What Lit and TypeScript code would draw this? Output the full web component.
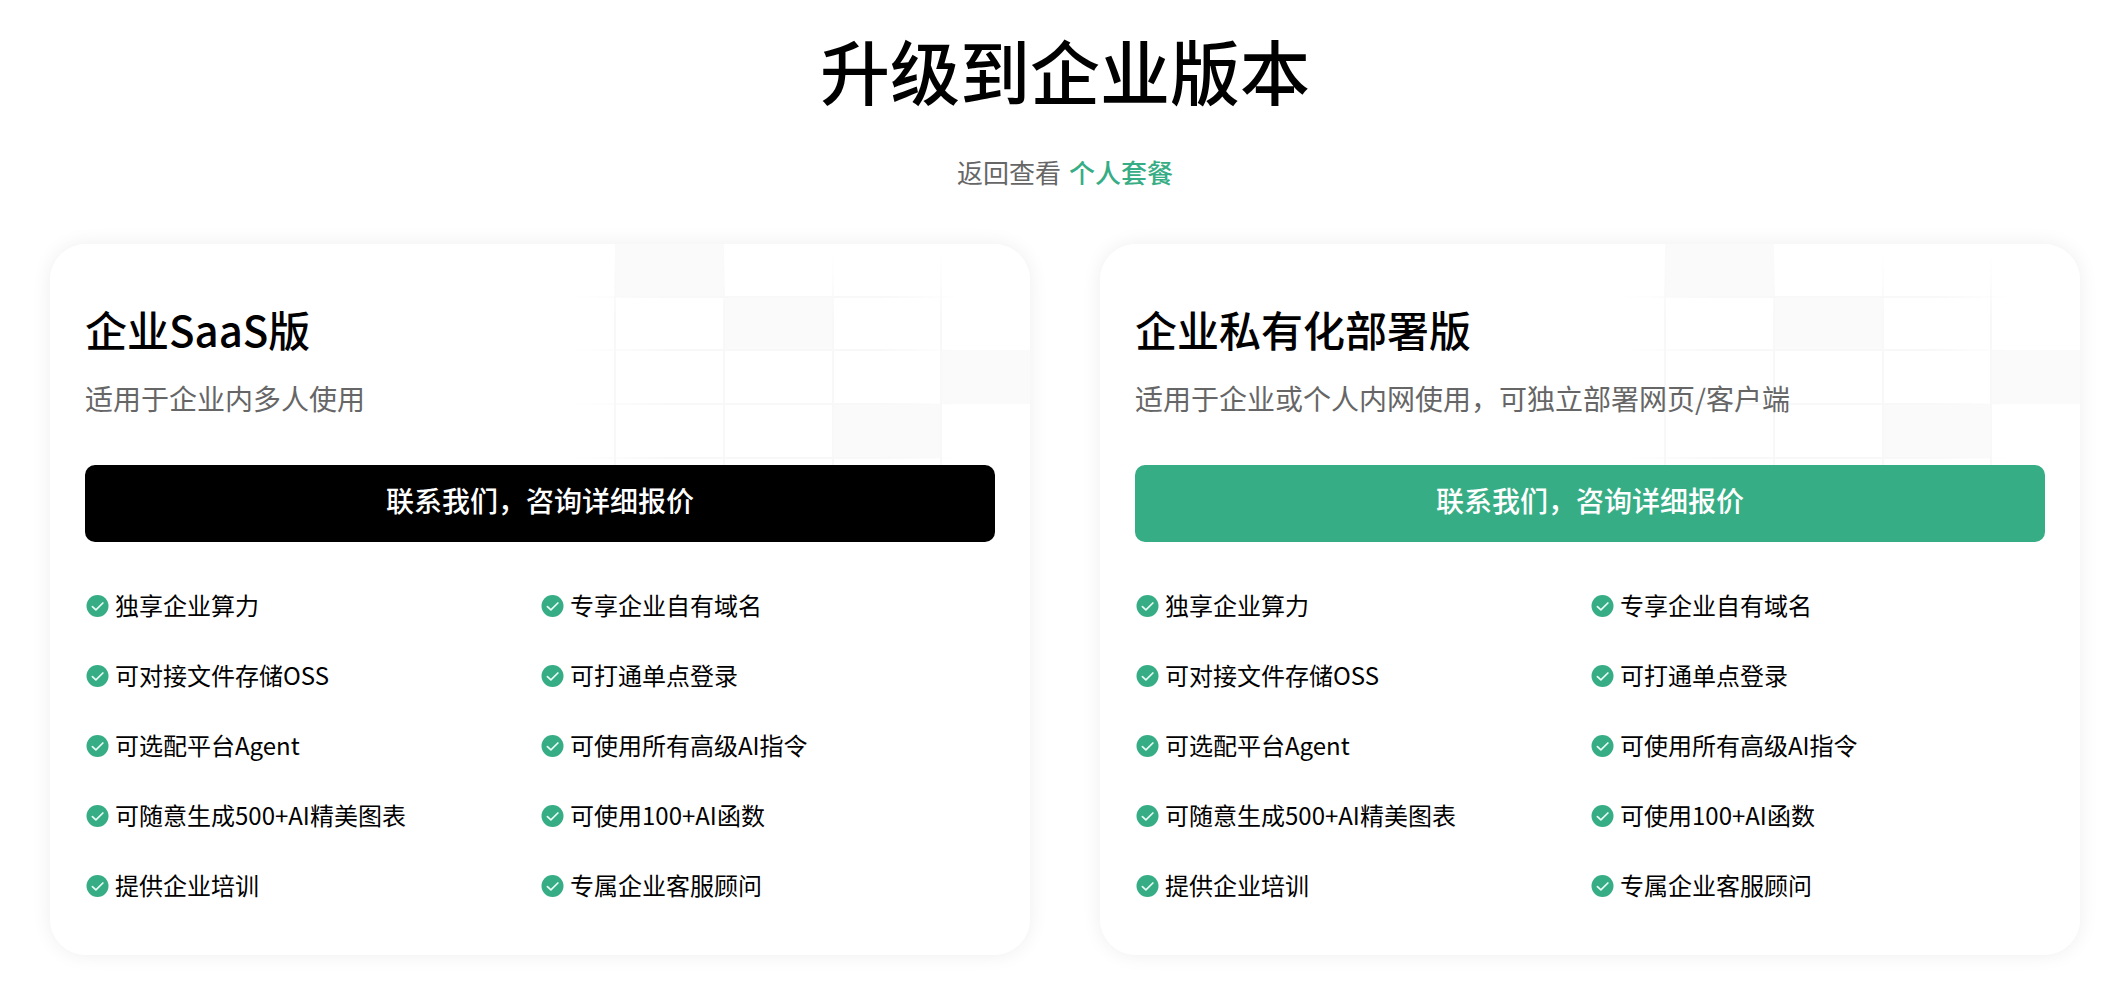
import { LitElement, html, css, svg } from "lit";
import { customElement, property } from "lit/decorators.js";

interface Plan {
  name: string;
  description: string;
  tone: "dark" | "green";
}

const FEATURES = [
  "独享企业算力",
  "专享企业自有域名",
  "可对接文件存储OSS",
  "可打通单点登录",
  "可选配平台Agent",
  "可使用所有高级AI指令",
  "可随意生成500+AI精美图表",
  "可使用100+AI函数",
  "提供企业培训",
  "专属企业客服顾问",
];

const PLANS: Plan[] = [
  { name: "企业SaaS版", description: "适用于企业内多人使用", tone: "dark" },
  {
    name: "企业私有化部署版",
    description: "适用于企业或个人内网使用，可独立部署网页/客户端",
    tone: "green",
  },
];

/* Faint checkered pattern: [x, y, width, height] of the filled cells. */
const CELLS = [
  [65, 0, 109, 53],
  [174, 53, 108, 54],
  [390, 106, 90, 54],
  [282, 160, 108, 54],
];

@customElement("plan-card")
export class PlanCard extends LitElement {
  @property({ attribute: false }) plan!: Plan;

  static styles = css`
    :host {
      display: block;
      min-width: 0;
    }
    .card {
      position: relative;
      overflow: hidden;
      box-sizing: border-box;
      height: 100%;
      padding: 53px 35px 34px;
      border-radius: 36px;
      background: #fff;
    }
    .frame {
      height: 100%;
      border-radius: 36px;
      box-shadow: 0 0 20px rgba(0, 0, 0, 0.07);
    }
    .pattern {
      position: absolute;
      top: 0;
      right: 0;
      width: 480px;
      height: 221px;
    }
    .content {
      position: relative;
    }
    .name {
      margin: 0;
      font-size: 42px;
      line-height: 64px;
      font-weight: 500;
    }
    .description {
      margin: 17px 0 0;
      font-size: 28px;
      line-height: 40px;
      color: #666;
    }
    .contact {
      display: block;
      width: 100%;
      height: 77px;
      margin: 47px 0 0;
      padding: 0 0 8px;
      border: 0;
      border-radius: 10px;
      font: inherit;
      font-size: 28px;
      font-weight: 500;
      color: #fff;
      cursor: pointer;
    }
    .dark {
      background: #000;
    }
    .green {
      background: #37ad85;
    }
    .features {
      display: grid;
      grid-template-columns: 1fr 1fr;
      grid-auto-rows: 70px;
      margin: 29px 0 0;
      padding: 0;
      list-style: none;
    }
    .feature {
      display: flex;
      align-items: center;
      gap: 6px;
      font-size: 24px;
      line-height: 36px;
      white-space: nowrap;
    }
    .label {
      padding-bottom: 2px;
    }
    .check {
      flex: none;
      width: 24px;
      height: 24px;
    }
  `;

  render() {
    const { name, description, tone } = this.plan;
    return html`
      <div class="frame">
        <article class="card">
          <svg class="pattern" viewBox="0 0 480 221" aria-hidden="true">
            <defs>
              <linearGradient id="row" gradientUnits="userSpaceOnUse" x1="20" y1="0" x2="410" y2="0">
                <stop offset="0" stop-color="#f8f8f8" stop-opacity="0" />
                <stop offset="0.25" stop-color="#f8f8f8" />
                <stop offset="0.8" stop-color="#f8f8f8" />
                <stop offset="1" stop-color="#f8f8f8" stop-opacity="0" />
              </linearGradient>
              <linearGradient id="column" gradientUnits="userSpaceOnUse" x1="0" y1="10" x2="0" y2="221">
                <stop offset="0" stop-color="#f8f8f8" stop-opacity="0" />
                <stop offset="0.3" stop-color="#f8f8f8" />
                <stop offset="1" stop-color="#f8f8f8" />
              </linearGradient>
            </defs>
            ${CELLS.map(
              ([x, y, w, h]) => svg`<rect x=${x} y=${y} width=${w} height=${h} fill="#fafafa" />`
            )}
            ${[52, 105, 159, 213].map(
              (y) => svg`<rect x="20" y=${y} width="390" height="2" fill="url(#row)" />`
            )}
            ${[64, 173, 282, 390].map(
              (x) => svg`<rect x=${x} y="10" width="2" height="211" fill="url(#column)" />`
            )}
          </svg>
          <div class="content">
            <h2 class="name">${name}</h2>
            <p class="description">${description}</p>
            <button class="contact ${tone}" type="button">联系我们，咨询详细报价</button>
            <ul class="features">
              ${FEATURES.map(
                (feature) => html`
                  <li class="feature">
                    <svg class="check" viewBox="0 0 24 24" aria-hidden="true">
                      <circle cx="12.5" cy="12" r="11" fill="#37ad85" />
                      <path
                        d="M7.4 12.6 10.9 15.8 17.9 9"
                        fill="none"
                        stroke="#e9fff6"
                        stroke-width="1.7"
                        stroke-linecap="round"
                        stroke-linejoin="round"
                      />
                    </svg>
                    <span class="label">${feature}</span>
                  </li>
                `
              )}
            </ul>
          </div>
        </article>
      </div>
    `;
  }
}

@customElement("app-root")
export class AppRoot extends LitElement {
  static styles = css`
    :host {
      display: block;
      font-family: "Noto Sans CJK SC", "Noto Sans", sans-serif;
      color: #000;
      background: #fff;
    }
    .page {
      padding: 18px 27px 52px 50px;
    }
    .header {
      text-align: center;
    }
    .title {
      margin: 0;
      font-size: 70px;
      line-height: 104px;
      font-weight: 500;
    }
    .back {
      display: flex;
      justify-content: center;
      gap: 8px;
      margin: 31px 0 0;
      font-size: 26px;
      line-height: 38px;
      color: #666;
    }
    .link {
      color: #37ad85;
      font-weight: 500;
      text-decoration: none;
    }
    .plans {
      display: grid;
      grid-template-columns: 1fr 1fr;
      gap: 70px;
      margin-top: 53px;
    }
  `;

  render() {
    return html`
      <main class="page">
        <header class="header">
          <h1 class="title">升级到企业版本</h1>
          <p class="back"><span>返回查看</span><a class="link" href="#personal">个人套餐</a></p>
        </header>
        <section class="plans">
          ${PLANS.map((plan) => html`<plan-card .plan=${plan}></plan-card>`)}
        </section>
      </main>
    `;
  }
}
